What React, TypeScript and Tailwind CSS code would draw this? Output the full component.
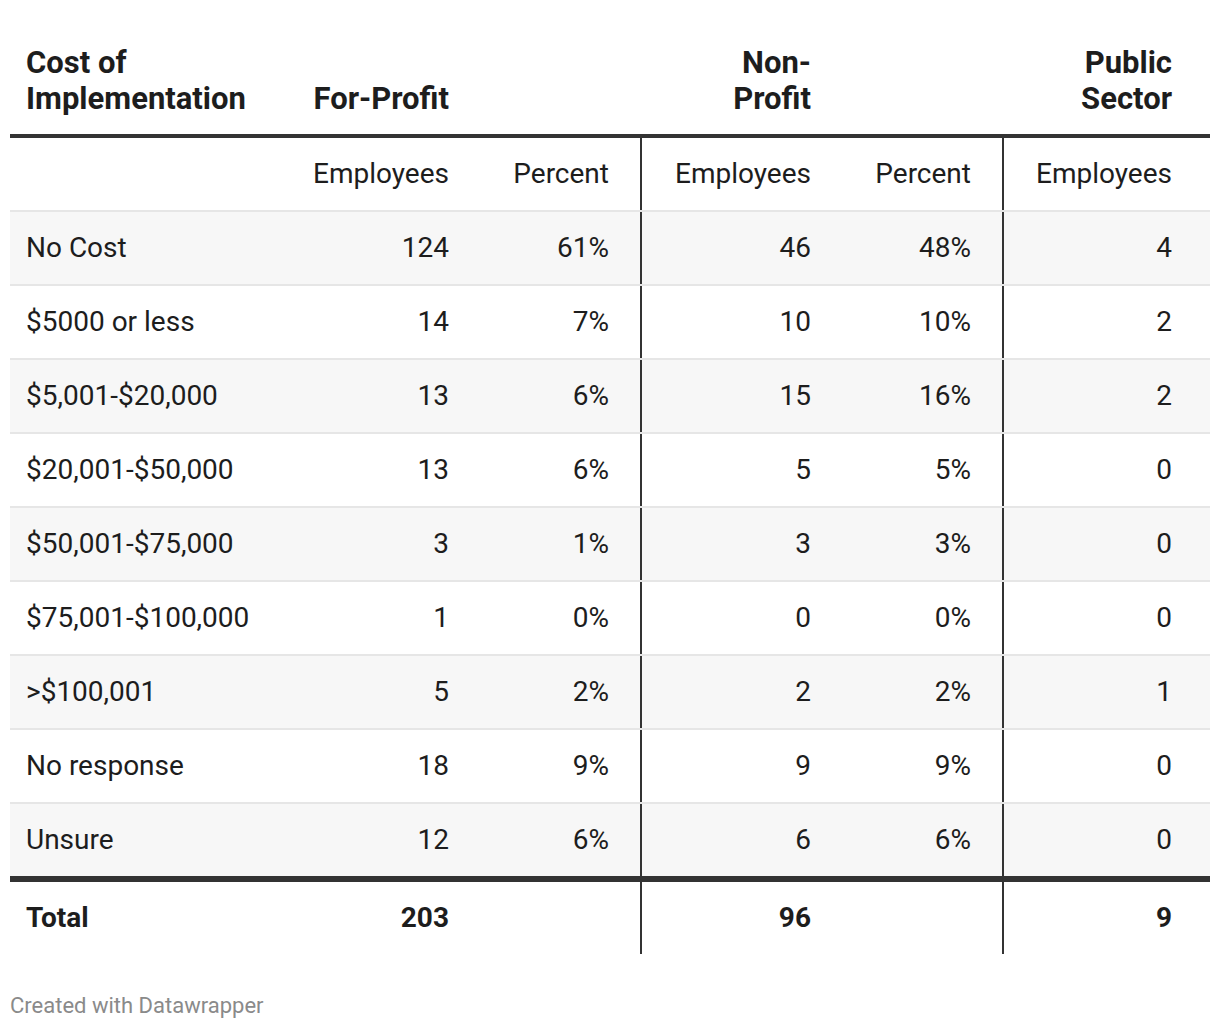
import React from 'react';

type Row = { label: string; fe: string; fp: string; ne: string; np: string; pe: string };

const rows: Row[] = [
  { label: 'No Cost', fe: '124', fp: '61%', ne: '46', np: '48%', pe: '4' },
  { label: '$5000 or less', fe: '14', fp: '7%', ne: '10', np: '10%', pe: '2' },
  { label: '$5,001-$20,000', fe: '13', fp: '6%', ne: '15', np: '16%', pe: '2' },
  { label: '$20,001-$50,000', fe: '13', fp: '6%', ne: '5', np: '5%', pe: '0' },
  { label: '$50,001-$75,000', fe: '3', fp: '1%', ne: '3', np: '3%', pe: '0' },
  { label: '$75,001-$100,000', fe: '1', fp: '0%', ne: '0', np: '0%', pe: '0' },
  { label: '>$100,001', fe: '5', fp: '2%', ne: '2', np: '2%', pe: '1' },
  { label: 'No response', fe: '18', fp: '9%', ne: '9', np: '9%', pe: '0' },
  { label: 'Unsure', fe: '12', fp: '6%', ne: '6', np: '6%', pe: '0' },
];

const grid = 'grid grid-cols-[270px_200px_160px_202px_160px_208px]';
const cell = 'flex items-center justify-end h-[72px] pr-[31px]';
const lastCell = 'flex items-center justify-end h-[72px] pr-[38px] border-l-2 border-[#333333]';
const midCell = 'flex items-center justify-end h-[72px] pr-[31px] border-l-2 border-[#333333]';

export default function App() {
  return (
    <div className="bg-white w-[1220px] h-[1030px] px-[10px] text-[#1d1d1d] text-[28px] leading-[36px] font-['Roboto',sans-serif]">
      {/* header */}
      <div className={`${grid} text-[31px] font-bold border-b-4 border-[#333333] pt-[45px]`}>
        <div className="flex items-end pl-[16px] pb-[17px] whitespace-nowrap">Cost of<br />Implementation</div>
        <div className="flex items-end justify-end pr-[31px] pb-[17px]">For-Profit</div>
        <div />
        <div className="flex items-end justify-end pr-[31px] pb-[17px] text-right">Non-<br />Profit</div>
        <div />
        <div className="flex items-end justify-end pr-[38px] pb-[17px] text-right">Public<br />Sector</div>
      </div>

      {/* sub header */}
      <div className={grid}>
        <div className="h-[72px]" />
        <div className={cell}>Employees</div>
        <div className={cell}>Percent</div>
        <div className={midCell}>Employees</div>
        <div className={cell}>Percent</div>
        <div className={lastCell}>Employees</div>
      </div>

      {rows.map((r, i) => (
        <div key={r.label} className={`${grid} border-t-2 border-[#e6e6e6] ${i % 2 === 0 ? 'bg-[#f7f7f7]' : 'bg-white'}`}>
          <div className="flex items-center h-[72px] pl-[16px]">{r.label}</div>
          <div className={cell}>{r.fe}</div>
          <div className={cell}>{r.fp}</div>
          <div className={midCell}>{r.ne}</div>
          <div className={cell}>{r.np}</div>
          <div className={lastCell}>{r.pe}</div>
        </div>
      ))}

      {/* total */}
      <div className={`${grid} border-t-[6px] border-[#333333] font-bold`}>
        <div className="flex items-center h-[72px] pl-[16px]">Total</div>
        <div className={cell}>203</div>
        <div className={cell}></div>
        <div className={midCell}>96</div>
        <div className={cell}></div>
        <div className={lastCell}>9</div>
      </div>

      <div className="mt-[38px] text-[22px] leading-[28px] text-[#8a8a8a]">Created with Datawrapper</div>
    </div>
  );
}
